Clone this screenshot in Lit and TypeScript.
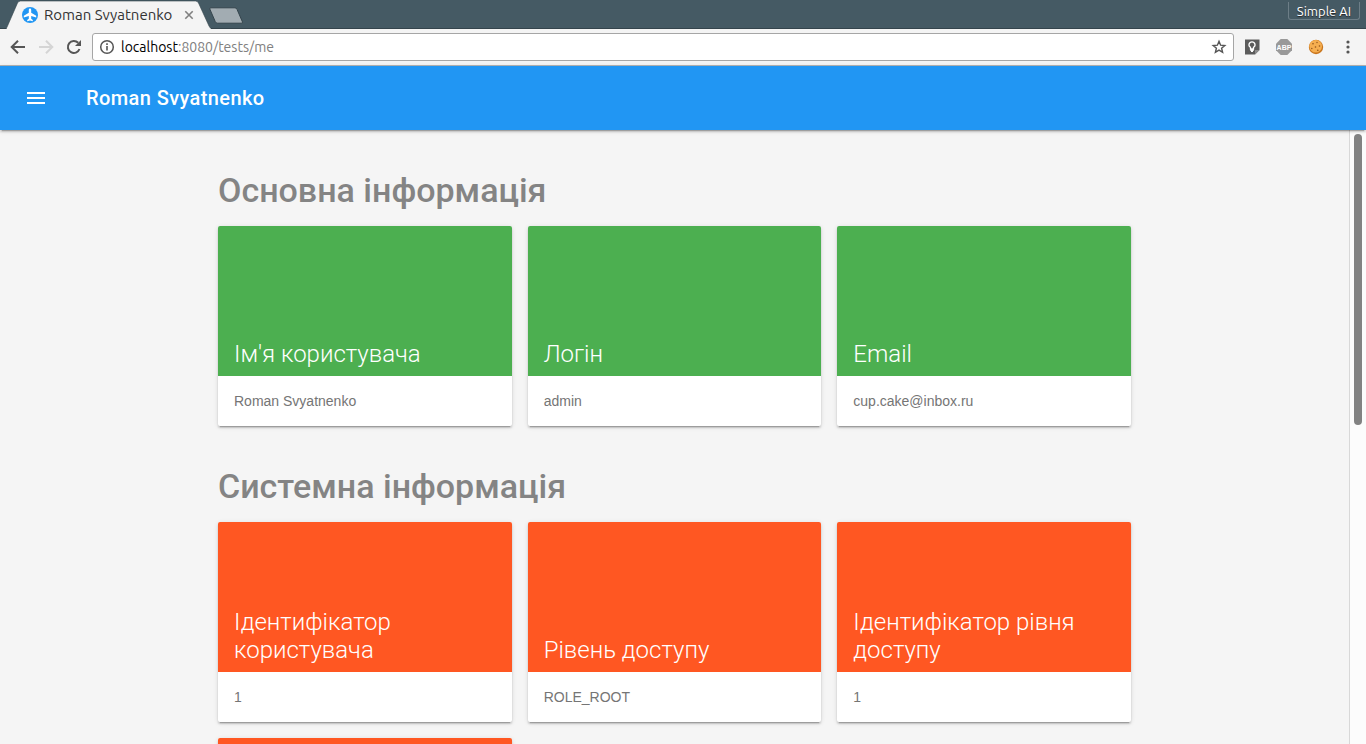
import { LitElement, html, css } from "lit";
import { customElement, property } from "lit/decorators.js";
import { classMap } from "lit/directives/class-map.js";

@customElement("info-card")
class InfoCard extends LitElement {
  @property() heading = "";
  @property() value = "";
  @property() tone = "green";

  static styles = css`
    :host {
      display: block;
      min-width: 0;
    }
    .card {
      display: flex;
      flex-direction: column;
      overflow: hidden;
      border-radius: 2px;
      background: #fff;
      box-shadow: 0 2px 2px 0 rgba(0, 0, 0, 0.14), 0 3px 1px -2px rgba(0, 0, 0, 0.2),
        0 1px 5px 0 rgba(0, 0, 0, 0.12);
    }
    .top {
      box-sizing: border-box;
      min-height: 150px;
      display: flex;
      align-items: flex-end;
      padding: 16px 16px 8px;
      color: #fff;
    }
    .green {
      background: #4caf50;
    }
    .orange {
      background: #ff5722;
    }
    .title {
      margin: 0;
      font: 300 24px/28px Roboto, sans-serif;
    }
    .value {
      margin: 0;
      padding: 16px;
      min-height: 18px;
      font: 14px/18px "Liberation Sans", Arial, sans-serif;
      color: #757575;
    }
  `;

  render() {
    return html`<article class="card">
      <div class=${classMap({ top: true, green: this.tone === "green", orange: this.tone === "orange" })}>
        <h3 class="title">${this.heading}</h3>
      </div>
      <p class="value">${this.value}</p>
    </article>`;
  }
}

@customElement("browser-chrome")
class BrowserChrome extends LitElement {
  static styles = css`
    :host {
      display: block;
      font-family: Ubuntu, "Noto Sans", sans-serif;
    }
    button {
      display: flex;
      padding: 0;
      border: 0;
      background: none;
    }
    svg {
      display: block;
    }
    .strip {
      display: flex;
      align-items: flex-start;
      height: 29px;
      padding: 0 6px;
      background: #455a64;
      box-shadow: inset 0 -1px #34444c;
    }
    .tab {
      position: relative;
      display: flex;
      align-items: center;
      box-sizing: border-box;
      width: 206px;
      height: 29px;
      padding: 1px 18px 0 16px;
    }
    .shape {
      position: absolute;
      inset: 0;
    }
    .tab > :not(.shape) {
      position: relative;
    }
    .name {
      flex: 1;
      margin-left: 6px;
      font-size: 15px;
      line-height: 20px;
      white-space: nowrap;
      color: #333;
    }
    .new {
      margin-top: 7px;
      margin-left: -4px;
    }
    .user {
      box-sizing: border-box;
      margin-left: auto;
      margin-top: 2px;
      padding: 0 8px;
      height: 18px;
      align-items: center;
      border: 1px solid #6d7e87;
      border-top: 0;
      border-radius: 0 0 3px 3px;
      color: #fff;
      font: 13px/16px Ubuntu, "Noto Sans", sans-serif;
      text-shadow: 0 1px 1px #222;
    }
    .bar {
      display: flex;
      align-items: center;
      height: 36px;
      padding: 0 10px 0 8px;
      background: #f4f4f4;
      border-bottom: 1px solid #b3b3b3;
    }
    .nav {
      display: flex;
      gap: 8px;
    }
    .address {
      flex: 1;
      display: flex;
      align-items: center;
      box-sizing: border-box;
      height: 28px;
      margin-left: 8px;
      padding: 0 6px;
      border: 1px solid #a6a6a6;
      border-radius: 3px;
      background: #fff;
    }
    .url {
      flex: 1;
      margin-left: 6px;
      font-size: 14px;
      line-height: 20px;
      color: #808080;
      text-decoration: none;
    }
    .host {
      color: #000;
    }
    .extras {
      display: flex;
      gap: 16px;
      margin-left: 10px;
    }
  `;

  render() {
    return html`
      <div class="strip">
        <div class="tab">
          <svg class="shape" width="206" height="29" viewBox="0 0 206 29">
            <path d="M0 29L1.500 26L11.500 3Q12.500 1 14.500 1H189.500Q191.500 1 192.500 3L203 26L205 29Z" fill="#f4f4f4" stroke="#34444c" stroke-width=".6" />
            <path d="M1 28H204.500V29H1Z" fill="#f4f4f4" />
          </svg>
          <svg width="16" height="16" viewBox="0 0 16 16">
            <circle cx="8" cy="8" r="8" fill="#2196f3" />
            <path d="M8 1.500C8.800 1.500 9.200 2.200 9.200 3V5.800L14.200 8.800V10.400L9.200 9V11.800L10.800 13V14.200L8 13.500L5.200 14.200V13L6.800 11.800V9L1.800 10.400V8.800L6.800 5.800V3C6.800 2.200 7.200 1.500 8 1.500Z" fill="#fff" />
          </svg>
          <span class="name">Roman Svyatnenko</span>
          <button aria-label="Close tab">
            <svg width="10" height="10" viewBox="0 0 10 10"><path d="M1.300 1.300L8.700 8.700M8.700 1.300L1.300 8.700" stroke="#808080" stroke-width="1.600" /></svg>
          </button>
        </div>
        <button class="new" aria-label="New tab">
          <svg width="36" height="17" viewBox="0 0 36 17"><path d="M2.800 .8H27Q28.300 .8 29 2.300L34.500 15Q34.500 16.200 33.500 16.200H9.500Q8 16.200 7.300 14.700L1.800 2Q1.500 .8 2.800 .8Z" fill="#a2acb2" stroke="#34444c" /></svg>
        </button>
        <button class="user">Simple AI</button>
      </div>
      <div class="bar">
        <div class="nav">
          <button aria-label="Back">
            <svg width="20" height="20" viewBox="0 0 20 20" fill="none" stroke="#555" stroke-width="2"><path d="M17 10H4M10 3.700L3.700 10L10 16.300" /></svg>
          </button>
          <button aria-label="Forward" disabled>
            <svg width="20" height="20" viewBox="0 0 20 20" fill="none" stroke="#d5d5d5" stroke-width="2"><path d="M3 10H16M10 3.700L16.300 10L10 16.300" /></svg>
          </button>
          <button aria-label="Reload">
            <svg width="20" height="20" viewBox="0 0 20 20"><path d="M15.500 12A6 6 0 1 1 14.200 5.800" fill="none" stroke="#555" stroke-width="2" /><path d="M17 3V9H11Z" fill="#555" /></svg>
          </button>
        </div>
        <div class="address">
          <svg width="16" height="16" viewBox="0 0 16 16"><circle cx="8" cy="8" r="6.300" fill="none" stroke="#555" stroke-width="1.500" /><path d="M7.200 7H8.800V11.500H7.200ZM7.200 4.300H8.800V5.900H7.200Z" fill="#555" /></svg>
          <a class="url" href="#"><span class="host">localhost</span>:8080/tests/me</a>
          <button aria-label="Bookmark">
            <svg width="16" height="16" viewBox="0 0 16 16"><path d="M8 2.300L9.600 6.200L13.800 6.500L10.600 9.200L11.600 13.300L8 11.100L4.400 13.300L5.400 9.200L2.200 6.500L6.400 6.200Z" fill="none" stroke="#555" stroke-width="1.400" /></svg>
          </button>
        </div>
        <div class="extras">
          <button aria-label="Notes">
            <svg width="16" height="16" viewBox="0 0 16 16"><path d="M1 .5H15.500V11L11 15.500H1Z" fill="#5c5c5c" /><path d="M11 15.500V11H15.500Z" fill="#8c8c8c" /><path d="M8 2.800A3 3 0 0 1 9.500 8.400V10H6.500V8.400A3 3 0 0 1 8 2.800Z" fill="none" stroke="#fff" stroke-width="1.300" /><path d="M6.300 10H9.700V12H9V13H7V12H6.300Z" fill="#fff" /></svg>
          </button>
          <button aria-label="Ad blocker">
            <svg width="16" height="16" viewBox="0 0 16 16"><path d="M4.700 0H11.300L16 4.700V11.300L11.300 16H4.700L0 11.300V4.700Z" fill="#999" /><text x="8" y="11" text-anchor="middle" font-family="Ubuntu Condensed, Liberation Sans Narrow, Liberation Sans" font-weight="bold" font-size="7" fill="#fff">ABP</text></svg>
          </button>
          <button aria-label="Cookies">
            <svg width="16" height="16" viewBox="0 0 16 16"><circle cx="8" cy="8" r="7.200" fill="#c9751c" /><circle cx="7.700" cy="7.200" r="6.300" fill="#f5ae50" /><g fill="#8f5218"><circle cx="5" cy="4.800" r=".8" /><circle cx="9" cy="3.500" r=".7" /><circle cx="11.500" cy="7" r=".8" /><circle cx="7.500" cy="8" r=".8" /><circle cx="3.800" cy="9.500" r=".7" /><circle cx="9.800" cy="11.300" r=".8" /></g></svg>
          </button>
          <button aria-label="Menu">
            <svg width="16" height="16" viewBox="0 0 16 16" fill="#555"><circle cx="8" cy="3" r="1.600" /><circle cx="8" cy="8" r="1.600" /><circle cx="8" cy="13" r="1.600" /></svg>
          </button>
        </div>
      </div>
    `;
  }
}

const sections = [
  {
    title: "Основна інформація",
    tone: "green",
    cards: [
      ["Ім'я користувача", "Roman Svyatnenko"],
      ["Логін", "admin"],
      ["Email", "cup.cake@inbox.ru"],
    ],
  },
  {
    title: "Системна інформація",
    tone: "orange",
    cards: [
      ["Ідентифікатор користувача", "1"],
      ["Рівень доступу", "ROLE_ROOT"],
      ["Ідентифікатор рівня доступу", "1"],
      ["", ""],
    ],
  },
];

@customElement("app-root")
class AppRoot extends LitElement {
  static styles = css`
    :host {
      display: flex;
      flex-direction: column;
      height: 100vh;
      background: #f5f5f5;
    }
    browser-chrome {
      flex: none;
    }
    .header {
      flex: none;
      position: relative;
      z-index: 1;
      display: flex;
      align-items: center;
      gap: 38px;
      height: 64px;
      padding: 0 24px;
      background: #2196f3;
      color: #fff;
      box-shadow: 0 2px 2px 0 rgba(0, 0, 0, 0.14), 0 3px 1px -2px rgba(0, 0, 0, 0.2),
        0 1px 5px 0 rgba(0, 0, 0, 0.12);
    }
    .menu {
      display: flex;
      padding: 0;
      border: 0;
      background: none;
    }
    .brand {
      margin: 0;
      font: 500 20px/24px Roboto, sans-serif;
      letter-spacing: 0.02em;
    }
    .body {
      flex: 1;
      min-height: 0;
      display: flex;
    }
    .content {
      flex: 1;
      min-width: 0;
      overflow-y: auto;
      scrollbar-width: none;
    }
    .inner {
      max-width: 913px;
      margin: 0 auto;
      padding-bottom: 40px;
    }
    .heading {
      margin: 0;
      padding: 40px 0 16px;
      font: 500 34px/40px Roboto, sans-serif;
      color: #848484;
    }
    .grid {
      display: grid;
      grid-template-columns: repeat(3, 1fr);
      gap: 16px;
    }
    .track {
      flex: none;
      box-sizing: border-box;
      width: 17px;
      padding: 4px;
      border-left: 1px solid #d8d8d8;
      background: #fcfcfc;
    }
    .thumb {
      width: 8px;
      height: 48%;
      border-radius: 4px;
      background: #828282;
    }
  `;

  render() {
    return html`
      <browser-chrome></browser-chrome>
      <header class="header">
        <button class="menu" aria-label="Open menu">
          <svg width="24" height="24" viewBox="0 0 24 24"><path d="M3 18h18v-2H3v2zm0-5h18v-2H3v2zm0-7v2h18V6H3z" fill="#fff" /></svg>
        </button>
        <h1 class="brand">Roman Svyatnenko</h1>
      </header>
      <div class="body">
        <main class="content">
          <div class="inner">
            ${sections.map(
              (s) => html`<section>
                <h2 class="heading">${s.title}</h2>
                <div class="grid">
                  ${s.cards.map(([h, v]) => html`<info-card .heading=${h} .value=${v} .tone=${s.tone}></info-card>`)}
                </div>
              </section>`
            )}
          </div>
        </main>
        <div class="track"><div class="thumb"></div></div>
      </div>
    `;
  }
}
